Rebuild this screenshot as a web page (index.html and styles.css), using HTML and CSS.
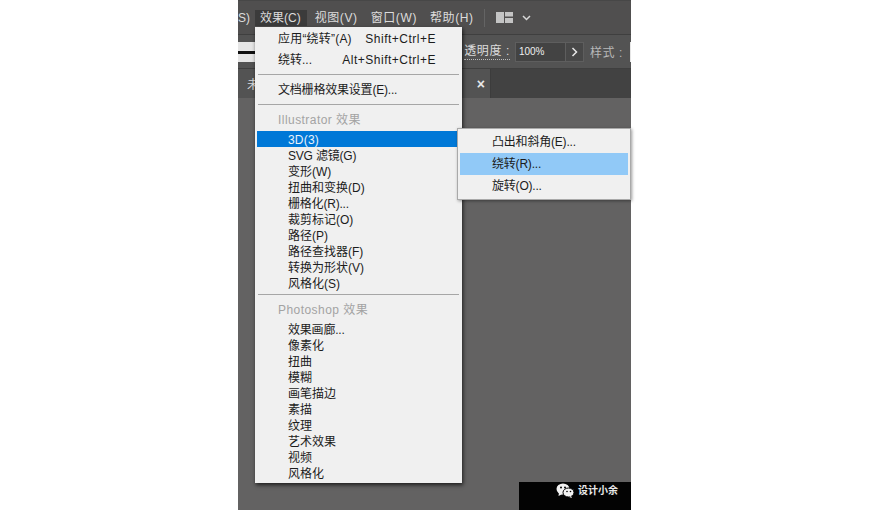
FILE: index.html
```html
<!DOCTYPE html>
<html lang="zh-CN">
<head>
    <meta charset="UTF-8">
    <title>效果菜单</title>
    <link rel="stylesheet" href="styles.css">
</head>
<body>
    <div class="app">
        <div class="menubar">
            <span class="menu-clip">S)</span>
            <span class="menu-title active">效果(C)</span>
            <span class="menu-title">视图(V)</span>
            <span class="menu-title">窗口(W)</span>
            <span class="menu-title">帮助(H)</span>
            <span class="bar-divider"></span>
            <svg class="layout-icon" width="17" height="11" viewBox="0 0 17 11">
                <rect x="0" y="0" width="8" height="11" fill="#c4c4c4"/>
                <rect x="9" y="0" width="8" height="4.500" fill="#c4c4c4"/>
                <rect x="9" y="6" width="8" height="5" fill="#c4c4c4"/>
            </svg>
            <svg class="chevron" width="9" height="6" viewBox="0 0 9 6">
                <path d="M1 1l3.500 3.500L8 1" fill="none" stroke="#d8d8d8" stroke-width="1.500"/>
            </svg>
        </div>
        <div class="controlbar">
            <div class="stroke-swatch"><span></span></div>
            <div class="control-right">
                <span class="opacity-label">透明度 :</span>
                <span class="opacity-input">100%</span>
                <span class="opacity-arrow">
                    <svg width="7" height="10" viewBox="0 0 7 10"><path d="M1.500 1l4 4-4 4" fill="none" stroke="#e8e8e8" stroke-width="1.500"/></svg>
                </span>
                <span class="style-label">样式 :</span>
                <span class="style-box"></span>
            </div>
        </div>
        <div class="tabbar">
            <div class="tab">
                <span class="tab-text">未</span>
                <span class="tab-close">×</span>
            </div>
        </div>
        <div class="canvas"></div>
        <div class="watermark">
            <svg width="18" height="15" viewBox="0 0 18 15">
                <ellipse cx="7" cy="6" rx="6.500" ry="5.500" fill="#f2f2f2"/>
                <path d="M3 9.500L2.500 13 6.500 11z" fill="#f2f2f2"/>
                <ellipse cx="12.500" cy="9.500" rx="5.500" ry="4.500" fill="#f2f2f2" stroke="#000" stroke-width="1"/>
                <path d="M15 13l1 2-3-1z" fill="#f2f2f2"/>
                <circle cx="5" cy="4.500" r="1" fill="#000"/>
                <circle cx="9" cy="4.500" r="1" fill="#000"/>
                <circle cx="11" cy="8.500" r=".8" fill="#000"/>
                <circle cx="14.500" cy="8.500" r=".8" fill="#000"/>
            </svg>
            <span>设计小余</span>
        </div>
    </div>

    <div class="menu">
        <div class="cmd"><span class="wide">应用“绕转”(A)</span><span class="shortcut">Shift+Ctrl+E</span></div>
        <div class="cmd"><span>绕转...</span><span class="shortcut">Alt+Shift+Ctrl+E</span></div>
        <hr class="sep sep-one">
        <div class="cmd solo">文档栅格效果设置(E)...</div>
        <hr class="sep sep-two">
        <div class="group-label">Illustrator 效果</div>
        <div class="item selected">3D(3)</div>
        <div class="item tight">SVG 滤镜(G)</div>
        <div class="item">变形(W)</div>
        <div class="item">扭曲和变换(D)</div>
        <div class="item tight">栅格化(R)...</div>
        <div class="item">裁剪标记(O)</div>
        <div class="item">路径(P)</div>
        <div class="item">路径查找器(F)</div>
        <div class="item">转换为形状(V)</div>
        <div class="item">风格化(S)</div>
        <hr class="sep sep-three">
        <div class="group-label">Photoshop 效果</div>
        <div class="item tight">效果画廊...</div>
        <div class="item">像素化</div>
        <div class="item">扭曲</div>
        <div class="item">模糊</div>
        <div class="item">画笔描边</div>
        <div class="item">素描</div>
        <div class="item">纹理</div>
        <div class="item">艺术效果</div>
        <div class="item">视频</div>
        <div class="item">风格化</div>
    </div>

    <div class="submenu">
        <div class="sub-item tight">凸出和斜角(E)...</div>
        <div class="sub-item hover tight">绕转(R)...</div>
        <div class="sub-item tight">旋转(O)...</div>
    </div>
</body>
</html>
```

FILE: styles.css
```css
body {
    margin: 0;
    height: 510px;
    background-color: #fff;
    font-family: "Liberation Sans", "Noto Sans CJK SC", sans-serif;
    overflow: hidden;
    position: relative;
}
.app {
    width: 393px;
    height: 510px;
    margin-left: 238px;
    background-color: #636262;
    display: flex;
    flex-direction: column;
    position: relative;
}
.menubar {
    height: 34px;
    background-color: #504f4f;
    display: flex;
    align-items: center;
    font-size: 12px;
    color: #dcdcdc;
    box-sizing: border-box;
    border-top: 1px solid #474747;
    flex-shrink: 0;
}
.menu-clip {
    width: 17px;
}
.menu-title {
    margin-right: 13px;
    line-height: 16px;
    letter-spacing: 0.6px;
}
.menu-title.active {
    background-color: #3b3b3b;
    margin-right: 8px;
    padding: 0 6px 0 5px;
    letter-spacing: 0;
}
.bar-divider {
    width: 1px;
    height: 18px;
    margin: 0 11px 0 -3px;
    background-color: #646464;
}
.chevron {
    margin-left: 9px;
}
.controlbar {
    height: 35px;
    background-color: #535353;
    border-top: 1px solid #3f3f3f;
    border-bottom: 1px solid #3f3f3f;
    box-sizing: border-box;
    display: flex;
    align-items: center;
    justify-content: space-between;
    font-size: 12px;
    color: #dcdcdc;
    flex-shrink: 0;
}
.stroke-swatch {
    width: 17px;
    height: 20px;
    margin-top: 1px;
    background-color: #e6e6e6;
    display: flex;
    align-items: center;
}
.stroke-swatch span {
    display: block;
    width: 100%;
    height: 3px;
    background-color: #111;
}
.control-right {
    display: flex;
    align-items: center;
}
.opacity-label {
    border-bottom: 1px dotted #bbb;
    margin-right: 5px;
    line-height: 15px;
    letter-spacing: 0.6px;
    white-space: nowrap;
}
.opacity-input {
    width: 51px;
    height: 20px;
    line-height: 17px;
    padding-left: 3px;
    box-sizing: border-box;
    background-color: #434343;
    border: 1px solid #5e5e5e;
    font-size: 10px;
    color: #efefef;
}
.opacity-arrow {
    width: 18px;
    height: 20px;
    box-sizing: border-box;
    background-color: #484848;
    border: 1px solid #5e5e5e;
    border-left: none;
    display: flex;
    align-items: center;
    justify-content: center;
}
.style-label {
    margin: 0 7px 0 6px;
    color: #b8b8b8;
    letter-spacing: 0.6px;
    white-space: nowrap;
}
.style-box {
    width: 1px;
    height: 20px;
    background-color: #e6e6e6;
}
.tabbar {
    height: 29px;
    background-color: #424242;
    display: flex;
    font-size: 12px;
    color: #dcdcdc;
    flex-shrink: 0;
}
.tab {
    width: 253px;
    background-color: #535353;
    border-right: 1px solid #3c3c3c;
    box-sizing: border-box;
    display: flex;
    align-items: center;
    justify-content: space-between;
    padding: 0 5px 0 9px;
}
.tab-close {
    font-size: 14px;
    font-weight: bold;
    color: #e8e8e8;
}
.canvas {
    flex: 1;
}
.watermark {
    position: absolute;
    right: 0;
    bottom: 0;
    width: 112px;
    height: 28px;
    background-color: #030303;
    display: flex;
    align-items: flex-start;
    padding: 1px 0 0 37px;
    box-sizing: border-box;
    gap: 4px;
    color: #e8e8e8;
    font-size: 10px;
    font-weight: bold;
    line-height: 16px;
}
.menu {
    position: absolute;
    left: 255px;
    top: 27px;
    width: 207px;
    height: 456px;
    box-sizing: border-box;
    background-color: #f0f0f0;
    box-shadow: 1px 2px 4px rgba(0, 0, 0, 0.7);
    padding-top: 3px;
    font-size: 12px;
    color: #1c1c1c;
}
.cmd {
    display: flex;
    justify-content: space-between;
    height: 21px;
    line-height: 18px;
    padding: 0 26px 0 23px;
}
.cmd.solo {
    height: 16px;
    letter-spacing: -0.2px;
}
.wide {
    letter-spacing: 0.2px;
}
.shortcut {
    letter-spacing: 0.5px;
}
.sep {
    border: none;
    height: 1px;
    margin: 0 3px;
    background-color: #a6a6a6;
}
.sep-one {
    margin-top: 2px;
    margin-bottom: 6px;
}
.sep-two {
    margin-top: 7px;
    margin-bottom: 5px;
}
.sep-three {
    margin-top: 3px;
    margin-bottom: 5px;
}
.group-label {
    height: 21px;
    line-height: 20px;
    padding-left: 23px;
    color: #a3a3a3;
    letter-spacing: 0.45px;
}
.item {
    height: 16px;
    line-height: 18px;
    margin-left: 2px;
    margin-right: 1px;
    padding-left: 31px;
}
.item.selected {
    background-color: #0078d7;
    color: #e8f2fb;
    letter-spacing: 0.2px;
}
.item.tight {
    letter-spacing: -0.2px;
}
.submenu {
    position: absolute;
    left: 457px;
    top: 128px;
    width: 174px;
    height: 72px;
    box-sizing: border-box;
    background-color: #f0f0f0;
    border: 1px solid #a9a9a9;
    box-shadow: 1px 1px 3px rgba(0, 0, 0, 0.4);
    padding-top: 2px;
    font-size: 12px;
    color: #1c1c1c;
}
.sub-item {
    height: 22px;
    line-height: 22px;
    padding-left: 32px;
    margin: 0 2px;
}
.sub-item.tight {
    letter-spacing: -0.2px;
}
.sub-item.hover {
    background-color: #91c9f7;
}
```
